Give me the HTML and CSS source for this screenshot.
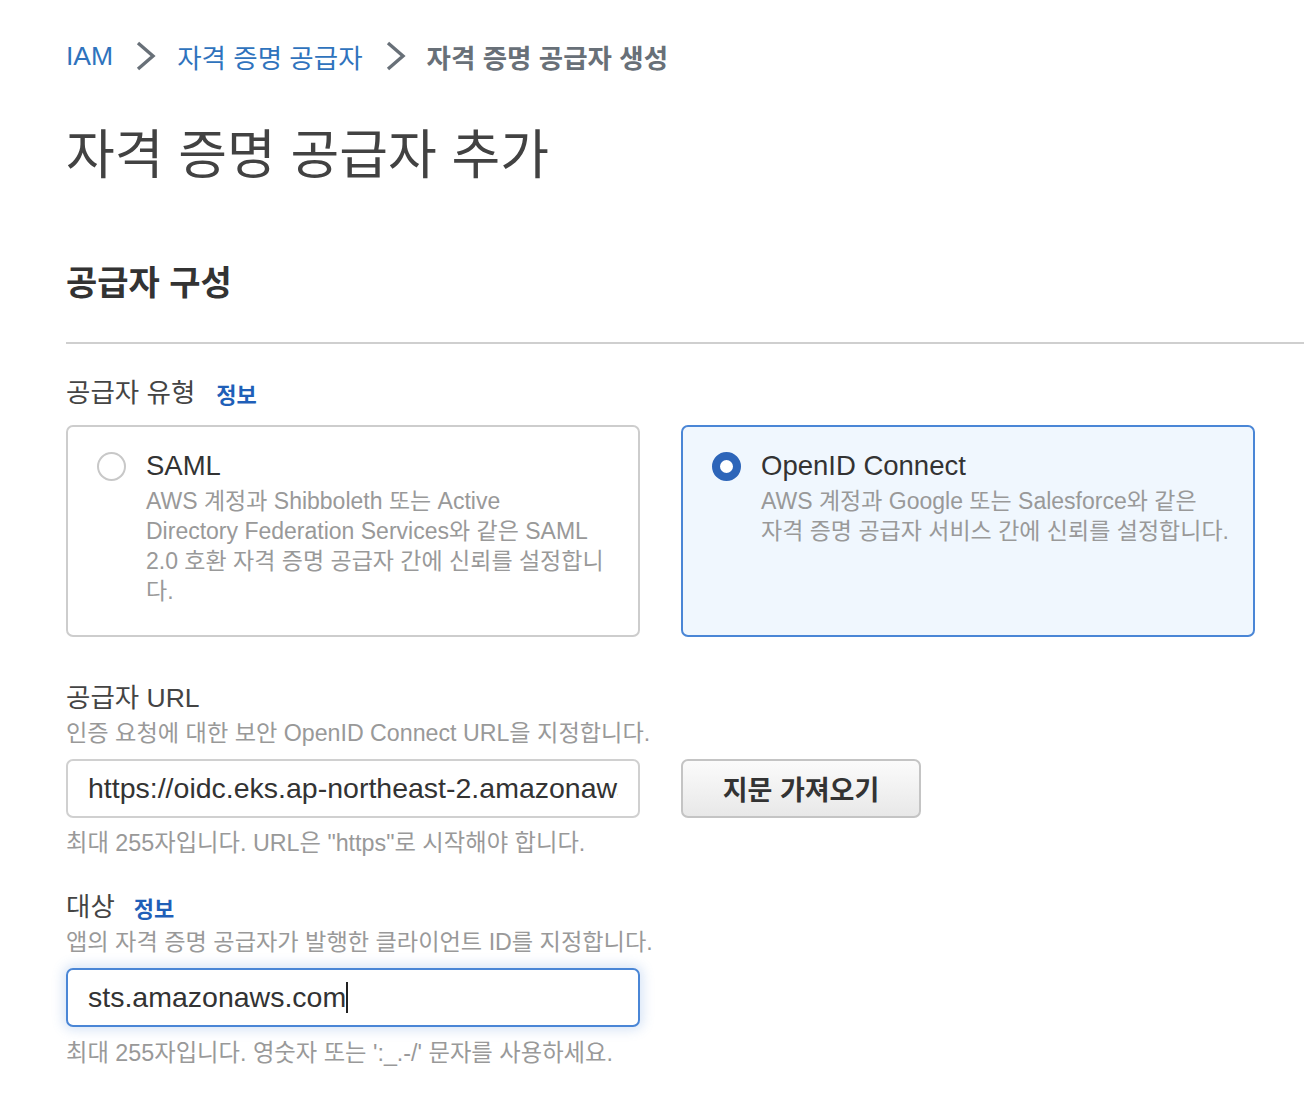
FILE: index.html
```html
<!DOCTYPE html>
<html lang="ko">
<head>
<meta charset="utf-8">
<title>자격 증명 공급자 추가</title>
<link rel="stylesheet" href="styles.css">
</head>
<body>
<main class="page">
  <nav class="crumbs">
    <a class="crumb-link" href="#">IAM</a>
    <svg class="chev" viewBox="0 0 20 30" width="20" height="30"><polyline points="2,2 17,15 2,28" fill="none" stroke="#687078" stroke-width="3.4"/></svg>
    <a class="crumb-link" href="#">자격 증명 공급자</a>
    <svg class="chev" viewBox="0 0 20 30" width="20" height="30"><polyline points="2,2 17,15 2,28" fill="none" stroke="#687078" stroke-width="3.4"/></svg>
    <span class="crumb-current">자격 증명 공급자 생성</span>
  </nav>

  <h1 class="title">자격 증명 공급자 추가</h1>

  <section class="panel">
    <h2 class="panel-title">공급자 구성</h2>
    <div class="divider"></div>

    <div class="label-row"><span class="label">공급자 유형</span><a class="info" href="#">정보</a></div>
    <div class="cards">
      <div class="card">
        <span class="radio"></span>
        <div class="card-body">
          <div class="card-title">SAML</div>
          <div class="card-desc">AWS 계정과 Shibboleth 또는 Active<br>Directory Federation Services와 같은 SAML<br>2.0 호환 자격 증명 공급자 간에 신뢰를 설정합니<br>다.</div>
        </div>
      </div>
      <div class="card card-selected">
        <span class="radio radio-on"></span>
        <div class="card-body">
          <div class="card-title">OpenID Connect</div>
          <div class="card-desc">AWS 계정과 Google 또는 Salesforce와 같은<br>자격 증명 공급자 서비스 간에 신뢰를 설정합니다.</div>
        </div>
      </div>
    </div>

    <div class="field-group">
      <div class="label">공급자 URL</div>
      <div class="desc">인증 요청에 대한 보안 OpenID Connect URL을 지정합니다.</div>
      <div class="input-row">
        <input class="input input-native" type="text" value="https://oidc.eks.ap-northeast-2.amazonaws.com/id/EXAMPLED539D4633E53DE1B716D3041E" aria-label="공급자 URL">
        <button class="btn" type="button">지문 가져오기</button>
      </div>
      <div class="hint">최대 255자입니다. URL은 "https"로 시작해야 합니다.</div>
    </div>

    <div class="field-group field-group-2">
      <div class="label-row label-row-tight"><span class="label">대상</span><a class="info" href="#">정보</a></div>
      <div class="desc">앱의 자격 증명 공급자가 발행한 클라이언트 ID를 지정합니다.</div>
      <div class="input input-focus"><span class="input-text">sts.amazonaws.com</span><span class="caret"></span></div>
      <div class="hint">최대 255자입니다. 영숫자 또는 ':_.-/' 문자를 사용하세요.</div>
    </div>
  </section>
</main>
</body>
</html>
```
FILE: styles.css
```css
* { box-sizing: border-box; }
html, body { margin: 0; padding: 0; background: #fff; }
body {
  font-family: "Liberation Sans", "Noto Sans CJK KR", sans-serif;
  color: #444;
  overflow: hidden;
}
.page {
  padding: 36px 0 0 66px;
}
.crumbs {
  display: flex;
  align-items: center;
  height: 40px;
  font-size: 26.5px;
}
.crumb-link {
  color: #2f73bd;
  text-decoration: none;
}
.chev {
  margin: 0 21px 0 23px;
  flex: none;
}
.crumb-current {
  color: #687078;
  font-weight: 700;
}
.title {
  margin: 50px 0 0 0;
  font-size: 53px;
  line-height: 60px;
  font-weight: 400;
  color: #424242;
}
.panel { margin-top: 77px; }
.panel-title {
  margin: 0;
  font-size: 34px;
  line-height: 40px;
  font-weight: 700;
  color: #333;
}
.divider {
  margin-top: 39px;
  height: 2px;
  background: #cfcfcf;
}
.label-row {
  display: flex;
  align-items: center;
  gap: 21px;
  margin-top: 32px;
  height: 34px;
}
.label {
  font-size: 26.5px;
  line-height: 34px;
  color: #444;
}
.info {
  font-size: 22px;
  font-weight: 700;
  color: #1f5fb8;
  text-decoration: none;
}
.cards {
  display: flex;
  gap: 41px;
  margin-top: 15px;
}
.card {
  width: 574px;
  height: 212px;
  border: 2px solid #cdcdcd;
  border-radius: 7px;
  display: flex;
  align-items: flex-start;
  padding: 23px 20px 0 29px;
  background: #fff;
}
.card-selected {
  border-color: #4a86d6;
  background: #f0f7fe;
}
.radio {
  flex: none;
  width: 29px;
  height: 29px;
  border-radius: 50%;
  border: 2px solid #c8c8c8;
  background: #fff;
  margin-top: 2px;
}
.radio-on {
  border: 8px solid #2d65b9;
  background: #fff;
}
.card-body { margin-left: 20px; }
.card-title {
  font-size: 27.5px;
  line-height: 32px;
  color: #333;
}
.card-desc {
  margin-top: 4px;
  font-size: 23px;
  line-height: 30px;
  color: #999;
  white-space: nowrap;
}
.field-group { margin-top: 44px; }
.desc {
  font-size: 23.2px;
  line-height: 32px;
  color: #999;
  margin-top: 2px;
}
.input-row {
  display: flex;
  gap: 41px;
  margin-top: 10px;
}
.input {
  width: 574px;
  height: 59px;
  border: 2px solid #d0d0d0;
  border-radius: 7px;
  background: #fff;
  padding: 0 20px;
  display: flex;
  align-items: center;
  overflow: hidden;
  white-space: nowrap;
  font-family: "Liberation Sans", "Noto Sans CJK KR", sans-serif;
  font-size: 28.5px;
  color: #333;
}
.input-native {
  margin: 0;
  outline: none;
}
.input-text { white-space: nowrap; }
.input-focus {
  border-color: #4a86d6;
  box-shadow: 0 0 12px 3px rgba(74, 134, 214, 0.22);
  margin-top: 10px;
}
.caret {
  flex: none;
  display: inline-block;
  width: 2px;
  height: 31px;
  background: #222;
}
.btn {
  width: 240px;
  height: 59px;
  border: 2px solid #c4c4c4;
  border-radius: 7px;
  background: linear-gradient(#fbfbfb, #e8e8e8);
  font-family: "Liberation Sans", "Noto Sans CJK KR", sans-serif;
  font-size: 27px;
  font-weight: 700;
  color: #333;
  padding: 0;
}
.hint {
  margin-top: 9px;
  font-size: 23.3px;
  line-height: 32px;
  color: #999;
}
.field-group-2 { margin-top: 31px; }
.label-row-tight { margin-top: 0; gap: 19px; }
.field-group-2 .hint { margin-top: 10px; }
```
